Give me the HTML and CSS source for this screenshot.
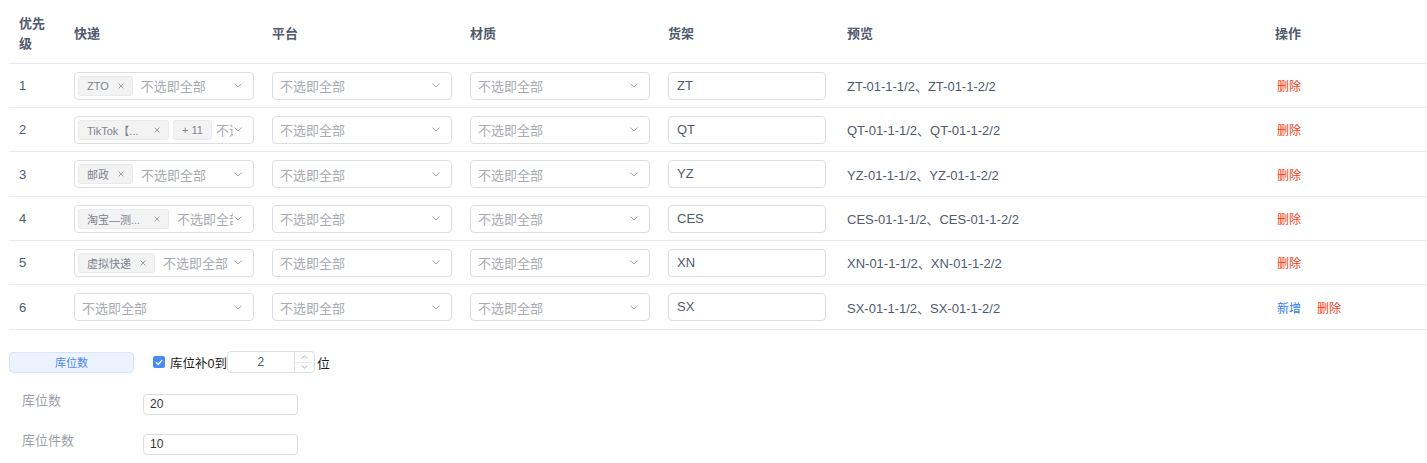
FILE: index.html
```html
<!DOCTYPE html>
<html lang="zh-CN">
<head>
<meta charset="utf-8">
<title>货架规则</title>
<link rel="stylesheet" href="styles.css">
</head>
<body>
<div class="page">
  <div class="table">
    <div class="row head">
      <div class="cell">优先级</div>
      <div class="cell">快递</div>
      <div class="cell">平台</div>
      <div class="cell">材质</div>
      <div class="cell">货架</div>
      <div class="cell">预览</div>
      <div class="cell">操作</div>
    </div>

    <div class="row">
      <div class="cell">1</div>
      <div class="cell">
        <div class="select multi">
          <div class="sel-body">
            <span class="tag"><span class="tag-text">ZTO</span><svg class="tag-x" viewBox="0 0 6 6"><path d="M0.5 0.5l5 5M5.5 0.5l-5 5"/></svg></span>
            <span class="ph">不选即全部</span>
          </div>
          <span class="arrow"><svg viewBox="0 0 8 5"><path d="M0.5 0.5l3.5 3.5 3.5-3.5"/></svg></span>
        </div>
      </div>
      <div class="cell"><div class="select"><div class="sel-body"><span class="ph">不选即全部</span></div><span class="arrow"><svg viewBox="0 0 8 5"><path d="M0.5 0.5l3.5 3.5 3.5-3.5"/></svg></span></div></div>
      <div class="cell"><div class="select"><div class="sel-body"><span class="ph">不选即全部</span></div><span class="arrow"><svg viewBox="0 0 8 5"><path d="M0.5 0.5l3.5 3.5 3.5-3.5"/></svg></span></div></div>
      <div class="cell"><div class="input">ZT</div></div>
      <div class="cell">ZT-01-1-1/2、ZT-01-1-2/2</div>
      <div class="cell ops"><a class="link del">删除</a></div>
    </div>

    <div class="row">
      <div class="cell">2</div>
      <div class="cell">
        <div class="select multi">
          <div class="sel-body">
            <span class="tag"><span class="tag-text clip">TikTok【...</span><svg class="tag-x" viewBox="0 0 6 6"><path d="M0.5 0.5l5 5M5.5 0.5l-5 5"/></svg></span>
            <span class="tag count"><span class="tag-text">+ 11</span></span>
            <span class="ph">不选即全部</span>
          </div>
          <span class="arrow"><svg viewBox="0 0 8 5"><path d="M0.5 0.5l3.5 3.5 3.5-3.5"/></svg></span>
        </div>
      </div>
      <div class="cell"><div class="select"><div class="sel-body"><span class="ph">不选即全部</span></div><span class="arrow"><svg viewBox="0 0 8 5"><path d="M0.5 0.5l3.5 3.5 3.5-3.5"/></svg></span></div></div>
      <div class="cell"><div class="select"><div class="sel-body"><span class="ph">不选即全部</span></div><span class="arrow"><svg viewBox="0 0 8 5"><path d="M0.5 0.5l3.5 3.5 3.5-3.5"/></svg></span></div></div>
      <div class="cell"><div class="input">QT</div></div>
      <div class="cell">QT-01-1-1/2、QT-01-1-2/2</div>
      <div class="cell ops"><a class="link del">删除</a></div>
    </div>

    <div class="row tall">
      <div class="cell">3</div>
      <div class="cell">
        <div class="select multi">
          <div class="sel-body">
            <span class="tag"><span class="tag-text">邮政</span><svg class="tag-x" viewBox="0 0 6 6"><path d="M0.5 0.5l5 5M5.5 0.5l-5 5"/></svg></span>
            <span class="ph">不选即全部</span>
          </div>
          <span class="arrow"><svg viewBox="0 0 8 5"><path d="M0.5 0.5l3.5 3.5 3.5-3.5"/></svg></span>
        </div>
      </div>
      <div class="cell"><div class="select"><div class="sel-body"><span class="ph">不选即全部</span></div><span class="arrow"><svg viewBox="0 0 8 5"><path d="M0.5 0.5l3.5 3.5 3.5-3.5"/></svg></span></div></div>
      <div class="cell"><div class="select"><div class="sel-body"><span class="ph">不选即全部</span></div><span class="arrow"><svg viewBox="0 0 8 5"><path d="M0.5 0.5l3.5 3.5 3.5-3.5"/></svg></span></div></div>
      <div class="cell"><div class="input">YZ</div></div>
      <div class="cell">YZ-01-1-1/2、YZ-01-1-2/2</div>
      <div class="cell ops"><a class="link del">删除</a></div>
    </div>

    <div class="row">
      <div class="cell">4</div>
      <div class="cell">
        <div class="select multi">
          <div class="sel-body">
            <span class="tag"><span class="tag-text clip">淘宝—测...</span><svg class="tag-x" viewBox="0 0 6 6"><path d="M0.5 0.5l5 5M5.5 0.5l-5 5"/></svg></span>
            <span class="ph">不选即全部</span>
          </div>
          <span class="arrow"><svg viewBox="0 0 8 5"><path d="M0.5 0.5l3.5 3.5 3.5-3.5"/></svg></span>
        </div>
      </div>
      <div class="cell"><div class="select"><div class="sel-body"><span class="ph">不选即全部</span></div><span class="arrow"><svg viewBox="0 0 8 5"><path d="M0.5 0.5l3.5 3.5 3.5-3.5"/></svg></span></div></div>
      <div class="cell"><div class="select"><div class="sel-body"><span class="ph">不选即全部</span></div><span class="arrow"><svg viewBox="0 0 8 5"><path d="M0.5 0.5l3.5 3.5 3.5-3.5"/></svg></span></div></div>
      <div class="cell"><div class="input">CES</div></div>
      <div class="cell">CES-01-1-1/2、CES-01-1-2/2</div>
      <div class="cell ops"><a class="link del">删除</a></div>
    </div>

    <div class="row">
      <div class="cell">5</div>
      <div class="cell">
        <div class="select multi">
          <div class="sel-body">
            <span class="tag"><span class="tag-text">虚拟快递</span><svg class="tag-x" viewBox="0 0 6 6"><path d="M0.5 0.5l5 5M5.5 0.5l-5 5"/></svg></span>
            <span class="ph">不选即全部</span>
          </div>
          <span class="arrow"><svg viewBox="0 0 8 5"><path d="M0.5 0.5l3.5 3.5 3.5-3.5"/></svg></span>
        </div>
      </div>
      <div class="cell"><div class="select"><div class="sel-body"><span class="ph">不选即全部</span></div><span class="arrow"><svg viewBox="0 0 8 5"><path d="M0.5 0.5l3.5 3.5 3.5-3.5"/></svg></span></div></div>
      <div class="cell"><div class="select"><div class="sel-body"><span class="ph">不选即全部</span></div><span class="arrow"><svg viewBox="0 0 8 5"><path d="M0.5 0.5l3.5 3.5 3.5-3.5"/></svg></span></div></div>
      <div class="cell"><div class="input">XN</div></div>
      <div class="cell">XN-01-1-1/2、XN-01-1-2/2</div>
      <div class="cell ops"><a class="link del">删除</a></div>
    </div>

    <div class="row tall">
      <div class="cell">6</div>
      <div class="cell"><div class="select"><div class="sel-body"><span class="ph">不选即全部</span></div><span class="arrow"><svg viewBox="0 0 8 5"><path d="M0.5 0.5l3.5 3.5 3.5-3.5"/></svg></span></div></div>
      <div class="cell"><div class="select"><div class="sel-body"><span class="ph">不选即全部</span></div><span class="arrow"><svg viewBox="0 0 8 5"><path d="M0.5 0.5l3.5 3.5 3.5-3.5"/></svg></span></div></div>
      <div class="cell"><div class="select"><div class="sel-body"><span class="ph">不选即全部</span></div><span class="arrow"><svg viewBox="0 0 8 5"><path d="M0.5 0.5l3.5 3.5 3.5-3.5"/></svg></span></div></div>
      <div class="cell"><div class="input">SX</div></div>
      <div class="cell">SX-01-1-1/2、SX-01-1-2/2</div>
      <div class="cell ops"><a class="link add">新增</a><a class="link del">删除</a></div>
    </div>
  </div>

  <div class="settings">
    <div class="toolbar">
      <button class="btn-light">库位数</button>
      <label class="check">
        <span class="check-box"><svg viewBox="0 0 12 12"><path d="M3 6.2l2.2 2.2 4-4.4"/></svg></span>
        <span class="check-label">库位补0到</span>
      </label>
      <div class="num">
        <div class="num-val">2</div>
        <div class="num-spin">
          <span class="spin up"><svg viewBox="0 0 8 5"><path d="M0.5 4.5l3.5-3.5 3.5 3.5"/></svg></span>
          <span class="spin down"><svg viewBox="0 0 8 5"><path d="M0.5 0.5l3.5 3.5 3.5-3.5"/></svg></span>
        </div>
      </div>
      <span class="unit">位</span>
    </div>
    <div class="form-item">
      <span class="form-label">库位数</span>
      <div class="form-input">20</div>
    </div>
    <div class="form-item">
      <span class="form-label">库位件数</span>
      <div class="form-input">10</div>
    </div>
  </div>
</div>
</body>
</html>
```

FILE: styles.css
```css
* { box-sizing: border-box; }
html, body { margin: 0; padding: 0; background: #fff; }
body {
  font-family: "Liberation Sans", "Noto Sans CJK SC", sans-serif;
  font-size: 13px;
  color: #515a6e;
}
.page { padding-left: 9px; }

.table { width: 1418px; }
.row {
  display: grid;
  grid-template-columns: 55px 198px 198px 198px 179px 428px 1fr;
  align-items: center;
  height: 44px;
  border-bottom: 1px solid #e8eaec;
}
.row.tall { height: 45px; }
.row.head {
  height: 64px;
  font-weight: bold;
  line-height: 20px;
  padding-top: 4px;
}
.cell { padding: 0 10px; white-space: normal; }
.row:not(.head) .cell { white-space: nowrap; }

.select {
  width: 180px;
  height: 28px;
  border: 1px solid #dcdee2;
  border-radius: 4px;
  display: flex;
  align-items: center;
  background: #fff;
}
.sel-body {
  flex: 1;
  min-width: 0;
  display: flex;
  align-items: center;
  overflow: hidden;
  padding-left: 7px;
}
.select.multi .sel-body { padding-left: 3px; }
.ph { color: #a8abb2; white-space: nowrap; flex-shrink: 0; }
.select.multi .ph { padding-left: 4px; }
.arrow {
  width: 20px;
  flex-shrink: 0;
  display: flex;
  justify-content: flex-end;
  padding-right: 11px;
}
.arrow svg { width: 8px; height: 5px; display: block; }
.arrow path { fill: none; stroke: #a3a7b0; stroke-width: 1; }

.tag {
  display: inline-flex;
  align-items: center;
  flex-shrink: 0;
  height: 20px;
  padding: 0 8px;
  margin-right: 4px;
  background: #f3f3f4;
  border: 1px solid #e8eaec;
  border-radius: 3px;
  font-size: 11px;
  color: #7f848e;
}
.tag.count { margin-right: 0; }
.tag-text { white-space: nowrap; }
.tag-text.clip { width: 58px; overflow: hidden; }
.tag-x { width: 6px; height: 6px; margin-left: 9px; display: block; }
.tag-x path { stroke: #9ea2aa; stroke-width: 1; fill: none; }

.input {
  width: 158px;
  height: 28px;
  border: 1px solid #dcdee2;
  border-radius: 4px;
  padding: 0 8px;
  line-height: 26px;
  color: #515a6e;
}

.ops { padding-left: 12px; font-size: 12px; }
.link { cursor: pointer; }
.link.del { color: #ed4014; }
.link.add { color: #2d7ff0; margin-right: 16px; }

.settings { padding-top: 21px; }
.toolbar { display: flex; align-items: center; height: 22px; }
.btn-light {
  width: 125px;
  height: 21px;
  padding: 0;
  border: 1px solid #d5e3fb;
  border-radius: 4px;
  background: #ecf3fe;
  color: #4a8af4;
  font-family: inherit;
  font-size: 11px;
}
.check { display: flex; align-items: center; margin-left: 19px; }
.check-box {
  width: 12px;
  height: 12px;
  border-radius: 2px;
  background: #4a8af4;
  display: block;
}
.check-box svg { width: 12px; height: 12px; display: block; }
.check-box path { fill: none; stroke: #fff; stroke-width: 1.4; }
.check-label { margin-left: 5px; color: #1a1a1a; font-size: 12.5px; }

.num {
  width: 88px;
  height: 22px;
  display: flex;
  border: 1px solid #dcdee2;
  border-radius: 4px;
}
.num-val {
  flex: 1;
  text-align: center;
  line-height: 20px;
  font-size: 12px;
  color: #515a6e;
}
.num-spin {
  width: 20px;
  border-left: 1px solid #dcdee2;
  display: flex;
  flex-direction: column;
}
.spin { flex: 1; display: flex; align-items: center; justify-content: center; }
.spin.up { border-bottom: 1px solid #e8eaec; }
.spin svg { width: 7px; height: 4px; display: block; }
.spin path { fill: none; stroke: #8a8f99; stroke-width: 1; }
.unit { margin-left: 2px; color: #1a1a1a; font-size: 13px; }

.form-item { display: flex; align-items: flex-start; margin-top: 21px; padding-left: 13px; }
.form-item + .form-item { margin-top: 19px; }
.form-label { width: 121px; line-height: 16px; margin-top: -1px; color: #9a9ea8; }
.form-input {
  width: 155px;
  height: 21px;
  border: 1px solid #dcdee2;
  border-radius: 4px;
  padding: 0 6px;
  line-height: 19px;
  font-size: 12px;
  color: #333;
}
```
